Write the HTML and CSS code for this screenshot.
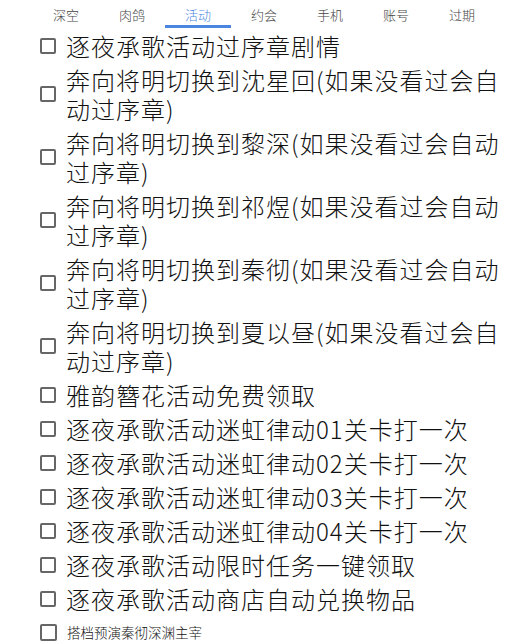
FILE: index.html
```html
<!DOCTYPE html>
<html lang="zh-CN">
<head>
    <meta charset="UTF-8">
    <meta name="viewport" content="width=device-width, initial-scale=1.0">
    <title>活动</title>
    <link rel="stylesheet" href="styles.css">
</head>
<body>
    <div class="tabs">
        <div class="tab">深空</div>
        <div class="tab">肉鸽</div>
        <div class="tab active">活动</div>
        <div class="tab">约会</div>
        <div class="tab">手机</div>
        <div class="tab">账号</div>
        <div class="tab">过期</div>
    </div>

    <ul class="task-list">
        <li class="task"><label><span class="box"></span><span>逐夜承歌活动过序章剧情</span></label></li>
        <li class="task"><label><span class="box"></span><span>奔向将明切换到沈星回(如果没看过会自动过序章)</span></label></li>
        <li class="task"><label><span class="box"></span><span>奔向将明切换到黎深(如果没看过会自动过序章)</span></label></li>
        <li class="task"><label><span class="box"></span><span>奔向将明切换到祁煜(如果没看过会自动过序章)</span></label></li>
        <li class="task"><label><span class="box"></span><span>奔向将明切换到秦彻(如果没看过会自动过序章)</span></label></li>
        <li class="task"><label><span class="box"></span><span>奔向将明切换到夏以昼(如果没看过会自动过序章)</span></label></li>
        <li class="task"><label><span class="box"></span><span>雅韵簪花活动免费领取</span></label></li>
        <li class="task"><label><span class="box"></span><span>逐夜承歌活动迷虹律动01关卡打一次</span></label></li>
        <li class="task"><label><span class="box"></span><span>逐夜承歌活动迷虹律动02关卡打一次</span></label></li>
        <li class="task"><label><span class="box"></span><span>逐夜承歌活动迷虹律动03关卡打一次</span></label></li>
        <li class="task"><label><span class="box"></span><span>逐夜承歌活动迷虹律动04关卡打一次</span></label></li>
        <li class="task"><label><span class="box"></span><span>逐夜承歌活动限时任务一键领取</span></label></li>
        <li class="task"><label><span class="box"></span><span>逐夜承歌活动商店自动兑换物品</span></label></li>
        <li class="task small"><label><span class="box"></span><span>搭档预演秦彻深渊主宰</span></label></li>
    </ul>
</body>
</html>
```

FILE: styles.css
```css
body {
    margin: 0;
    padding: 0;
    font-family: "Noto Sans CJK SC", "Noto Sans", sans-serif;
    font-weight: 300;
    color: #111;
    background: #fff;
}

.tabs {
    display: flex;
    padding: 0 33px;
    height: 28px;
}

.tab {
    flex: 1;
    text-align: center;
    font-size: 13px;
    line-height: 30px;
    height: 25px;
    color: #444;
    border-bottom: 3px solid transparent;
}

.tab.active {
    color: #4a86e0;
    border-bottom-color: #4a86e0;
}

.task-list {
    list-style: none;
    margin: 3px 0 0 0;
    padding: 0 20px 0 40px;
}

.task {
    margin-bottom: 5px;
}

.task label {
    display: flex;
    align-items: center;
    gap: 10px;
    font-size: 24px;
    line-height: 29px;
    letter-spacing: 1px;
}

.box {
    flex: none;
    width: 16px;
    height: 16px;
    border: 2px solid #666;
    border-radius: 2px;
    box-sizing: border-box;
}

.task.small label {
    font-size: 13.5px;
    line-height: 28px;
    letter-spacing: 0;
}

.task.small .box {
    width: 17px;
    height: 17px;
}
```
